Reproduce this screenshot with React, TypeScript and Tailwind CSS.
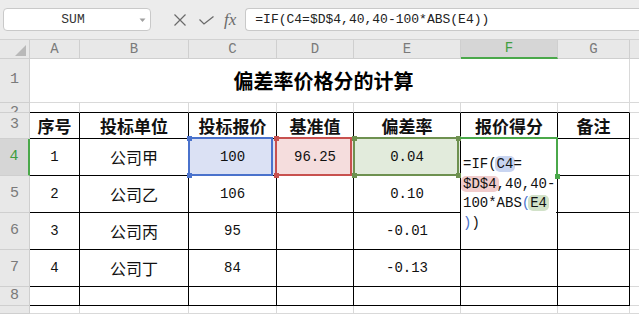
import React from "react";

const headerCell =
  "bg-[#e8e8e8] border-r border-b border-[#cfcfcf] flex items-center justify-center text-[#7a7a7a] text-[14px] font-['Liberation_Mono',monospace] overflow-hidden";
const rowHead =
  "bg-[#e8e8e8] border-r border-b border-[#cfcfcf] flex items-center justify-center text-[#7a7a7a] text-[15px] font-['Liberation_Mono',monospace] overflow-hidden";
const tCell =
  "border-r border-b border-black flex items-center justify-center text-[#111] overflow-hidden";
const gCell = "border-r border-b border-[#d9d9d9]";
const extraCell = "border-b border-[#d9d9d9]";
const cjk = "font-['Noto_Sans_CJK_SC',sans-serif] text-[16px]";
const cjkBold = "font-['Noto_Sans_CJK_SC',sans-serif] text-[17px] font-bold";
const num = "font-['Liberation_Mono',monospace] text-[14px]";

type Row = { n: string; cells: string[] };

const rows: Row[] = [
  { n: "4", cells: ["1", "公司甲", "100", "96.25", "0.04", "", ""] },
  { n: "5", cells: ["2", "公司乙", "106", "", "0.10", "", ""] },
  { n: "6", cells: ["3", "公司丙", "95", "", "-0.01", "", ""] },
  { n: "7", cells: ["4", "公司丁", "84", "", "-0.13", "", ""] },
  { n: "8", cells: ["", "", "", "", "", "", ""] },
];

const heads = ["序号", "投标单位", "投标报价", "基准值", "偏差率", "报价得分", "备注"];

function isCjk(s: string) {
  return /[\u4e00-\u9fff]/.test(s);
}

function Handle({ x, y, color }: { x: number; y: number; color: string }) {
  return (
    <div
      className="absolute w-[5px] h-[5px]"
      style={{ left: x - 2, top: y - 2, backgroundColor: color }}
    />
  );
}

export default function App() {
  return (
    <div className="w-[639px] h-[314px] overflow-hidden bg-white flex flex-col select-none">
      {/* toolbar */}
      <div className="h-[40px] shrink-0 bg-[#ececec] border-b border-[#d2d2d2] flex items-center">
        <div className="ml-[3px] w-[148px] h-[23px] bg-white border border-[#c9c9c9] rounded-[4px] flex items-center relative">
          <span className="flex-1 text-center text-[13px] text-[#333] font-['Liberation_Mono',monospace] pr-[8px]">
            SUM
          </span>
          <svg className="absolute right-[4px] top-[9px]" width="7" height="5" viewBox="0 0 7 5">
            <path d="M0.5 0.5 L6.5 0.5 L3.5 4 Z" fill="#a0a0a0" />
          </svg>
        </div>
        <svg className="ml-[23px]" width="12" height="12" viewBox="0 0 12 12">
          <path d="M0.5 0.5 L11.5 11.5 M11.5 0.5 L0.5 11.5" stroke="#6a6a6a" strokeWidth="1.2" fill="none" />
        </svg>
        <svg className="ml-[13px] mt-[2px]" width="15" height="9" viewBox="0 0 15 9">
          <path d="M0.5 3.5 L5 8 L14.5 0.5" stroke="#6a6a6a" strokeWidth="1.3" fill="none" />
        </svg>
        <span className="ml-[10px] text-[17px] italic text-[#6a6a6a] font-['Liberation_Serif',serif] leading-none">
          fx
        </span>
        <div className="ml-[9px] flex-1 h-[23px] bg-white border border-r-0 border-[#c9c9c9] rounded-l-[4px] flex items-center pl-[9px]">
          <span className="text-[13px] text-[#222] font-['Liberation_Mono',monospace] whitespace-pre">
            =IF(C4=$D$4,40,40-100*ABS(E4))
          </span>
        </div>
      </div>

      {/* sheet */}
      <div className="relative flex-1">
        <div className="grid grid-cols-[30px_50px_109px_88px_77px_107px_97px_72px_1fr] grid-rows-[19px_44px_10px_26px_37px_37px_37px_37px_19px_1fr] h-full">
          {/* column headers */}
          <div className={headerCell + " relative"}>
            <svg className="absolute left-[15px] top-[5px]" width="11" height="11" viewBox="0 0 11 11">
              <path d="M11 0 L11 11 L0 11 Z" fill="#b9b9b9" />
            </svg>
          </div>
          <div className={headerCell}>A</div>
          <div className={headerCell}>B</div>
          <div className={headerCell}>C</div>
          <div className={headerCell}>D</div>
          <div className={headerCell}>E</div>
          <div className="bg-[#d6d6d6] border-r border-[#cfcfcf] border-b-2 border-b-[#4aa84a] flex items-center justify-center text-[#3f9e3f] text-[14px] font-['Liberation_Mono',monospace]">
            F
          </div>
          <div className={headerCell}>G</div>
          <div className="bg-[#e8e8e8] border-b border-[#cfcfcf]" />

          {/* row 1 */}
          <div className={rowHead}>1</div>
          <div className="col-span-7 border-r border-b border-[#d9d9d9] flex items-center justify-center pr-[12px]">
            <span className="font-['Noto_Sans_CJK_SC',sans-serif] text-[20px] font-bold text-black">
              偏差率价格分的计算
            </span>
          </div>
          <div className={extraCell} />

          {/* row 2 */}
          <div className="bg-[#e8e8e8] border-r border-b border-[#cfcfcf] flex justify-center items-start text-[#7a7a7a] text-[15px] font-['Liberation_Mono',monospace] overflow-hidden leading-none pt-[2px]">
            2
          </div>
          {[0, 1, 2, 3, 4, 5, 6].map((i) => (
            <div key={i} className="border-r border-r-[#d9d9d9] border-b border-b-black" />
          ))}
          <div className={extraCell} />

          {/* row 3 headers */}
          <div className={rowHead}>3</div>
          {heads.map((h) => (
            <div key={h} className={tCell}>
              <span className={cjkBold}>{h}</span>
            </div>
          ))}
          <div className={extraCell} />

          {/* data rows */}
          {rows.map((r) => (
            <React.Fragment key={r.n}>
              {r.n === "4" ? (
                <div className="bg-[#d6d6d6] border-r-2 border-r-[#4aa84a] border-b border-b-[#cfcfcf] flex items-center justify-center text-[#3f9e3f] text-[15px] font-['Liberation_Mono',monospace]">
                  4
                </div>
              ) : (
                <div className={rowHead}>{r.n}</div>
              )}
              {r.cells.map((c, i) => {
                let bg = "";
                if (r.n === "4" && i === 2) bg = " bg-[#dbe1f4]";
                if (r.n === "4" && i === 3) bg = " bg-[#f5dddd]";
                if (r.n === "4" && i === 4) bg = " bg-[#e2ebdc]";
                return (
                  <div key={i} className={tCell + bg}>
                    {c !== "" && <span className={isCjk(c) ? cjk : num}>{c}</span>}
                  </div>
                );
              })}
              <div className={extraCell} />
            </React.Fragment>
          ))}

          {/* row 9 partial */}
          <div className={rowHead} />
          {[0, 1, 2, 3, 4, 5, 6].map((i) => (
            <div key={i} className={gCell} />
          ))}
          <div className={extraCell} />
        </div>

        {/* reference highlight boxes */}
        <div className="absolute left-[188px] top-[97px] w-[85px] h-[39px] border-2 border-[#4a72cc]" />
        <div className="absolute left-[275px] top-[97px] w-[77px] h-[39px] border-2 border-[#c8514f]" />
        <div className="absolute left-[353px] top-[97px] w-[106px] h-[39px] border-2 border-[#6e9150]" />
        <Handle x={189} y={98} color="#4a72cc" />
        <Handle x={189} y={135} color="#4a72cc" />
        <Handle x={276} y={98} color="#c8514f" />
        <Handle x={276} y={135} color="#c8514f" />
        <Handle x={354} y={98} color="#6e9150" />
        <Handle x={354} y={135} color="#6e9150" />
        <Handle x={458} y={98} color="#6e9150" />
        <Handle x={458} y={135} color="#6e9150" />

        {/* in-cell editor */}
        <div className="absolute left-[461px] top-[99px] w-[95px] h-[110px] bg-white pl-[2px] pt-[16px] font-['Liberation_Mono',monospace] text-[14px] leading-[19.5px] text-[#111] whitespace-pre">
          <div>
            =IF(<span className="bg-[#c9d5f1] rounded-[5px] px-[2px] -mx-[2px]">C4</span>=
          </div>
          <div>
            <span className="bg-[#f1cccc] rounded-[5px] px-[2px] -mx-[2px]">$D$4</span>,40,40-
          </div>
          <div>
            100*ABS<span className="text-[#4a72cc]">(</span>
            <span className="bg-[#d2e2c9] rounded-[5px] px-[2px] -mx-[2px]">E4</span>
          </div>
          <div>
            <span className="text-[#4a72cc]">)</span>)
          </div>
        </div>

        {/* active cell */}
        <div className="absolute left-[460px] top-[97px] w-[98px] h-[2px] bg-[#4aa84a]" />
        <div className="absolute left-[556px] top-[97px] w-[2px] h-[39px] bg-[#4aa84a]" />
        <div className="absolute left-[555px] top-[134px] w-[5px] h-[5px] bg-[#4aa84a]" />
      </div>
    </div>
  );
}
